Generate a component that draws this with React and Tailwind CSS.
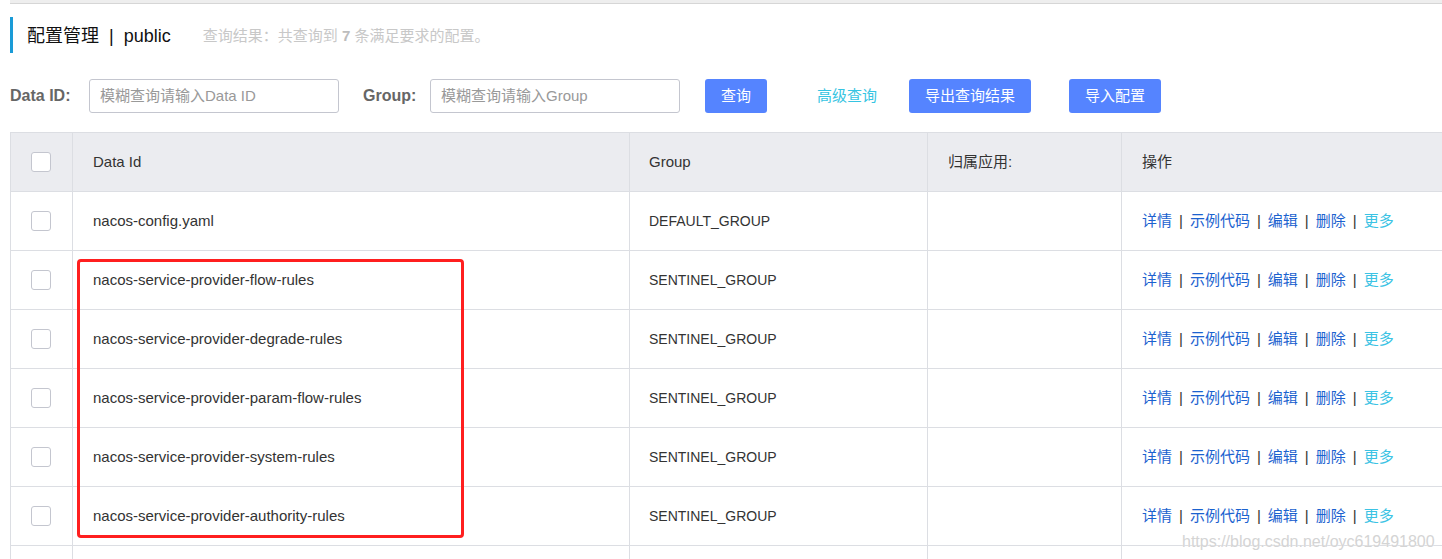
import React from "react";

const rows = [
  ["nacos-config.yaml", "DEFAULT_GROUP"],
  ["nacos-service-provider-flow-rules", "SENTINEL_GROUP"],
  ["nacos-service-provider-degrade-rules", "SENTINEL_GROUP"],
  ["nacos-service-provider-param-flow-rules", "SENTINEL_GROUP"],
  ["nacos-service-provider-system-rules", "SENTINEL_GROUP"],
  ["nacos-service-provider-authority-rules", "SENTINEL_GROUP"],
];

const font = { fontFamily: '"Liberation Sans", "Noto Sans CJK SC", sans-serif' };

function Checkbox() {
  return <div className="w-[20px] h-[20px] rounded-[3px] border border-[#c4c6cf] bg-white" />;
}

function Sep() {
  return <span className="mx-[7px] text-[#333]">|</span>;
}

function Row({ cells, header, empty }) {
  return (
    <div
      className={`grid grid-cols-[62px_557px_298px_194px_1fr] ${empty ? "h-[14px]" : "h-[59px]"} border-b border-[#dcdee3] ${header ? "bg-[#ebecf0]" : "bg-white"}`}
    >
      <div className="flex items-center justify-center border-r border-[#dcdee3] pr-[1px]">
        {!empty && <Checkbox />}
      </div>
      <div className="flex items-center pl-[20px] border-r border-[#dcdee3] text-[#333]">{cells?.[0]}</div>
      <div className={`flex items-center pl-[19px] border-r border-[#dcdee3] text-[#333] ${header ? "" : "text-[14px]"}`}>{cells?.[1]}</div>
      <div className="flex items-center pl-[20px] border-r border-[#dcdee3] text-[#333]">{cells?.[2]}</div>
      <div className="flex items-center pl-[20px] text-[#333]">{cells?.[3]}</div>
    </div>
  );
}

function Actions() {
  return (
    <div className="flex items-center">
      <span className="text-[#1b62cf]">详情</span>
      <Sep />
      <span className="text-[#1b62cf]">示例代码</span>
      <Sep />
      <span className="text-[#1b62cf]">编辑</span>
      <Sep />
      <span className="text-[#1b62cf]">删除</span>
      <Sep />
      <span className="text-[#3cc3e4]">更多</span>
    </div>
  );
}

export default function App() {
  return (
    <div className="relative w-[1442px] h-[559px] overflow-hidden bg-white text-[15px]" style={font}>
      <div className="ml-[10px] h-[4px] bg-[#eeeeee] border-b border-[#d6d6d6]" />
      <div className="ml-[10px] mt-[13px] h-[36px] border-l-[3px] border-[#1a9bd7] pl-[14px] flex items-center">
        <span className="text-[18px] text-[#111] pt-[2px]">配置管理</span>
        <span className="text-[18px] text-[#111] mx-[10px] pt-[2px]">|</span>
        <span className="text-[18px] text-[#111] pt-[2px]">public</span>
        <span className="ml-[32px] text-[15px] text-[#c8c8c8] pt-[2px]">
          查询结果：共查询到 <b className="text-[#bdbdbd]">7</b> 条满足要求的配置。
        </span>
      </div>

      <div className="mt-[26px] ml-[10px] h-[34px] flex items-center">
        <span className="w-[79px] font-bold text-[16px] text-[#666]">Data ID:</span>
        <div className="w-[250px] h-[34px] rounded-[3px] border border-[#c4c6cf] flex items-center pl-[10px] text-[#999]">
          模糊查询请输入Data ID
        </div>
        <span className="ml-[24px] w-[67px] font-bold text-[16px] text-[#666]">Group:</span>
        <div className="w-[250px] h-[34px] rounded-[3px] border border-[#c4c6cf] flex items-center pl-[10px] text-[#999]">
          模糊查询请输入Group
        </div>
        <div className="ml-[25px] w-[62px] h-[34px] rounded-[3px] bg-[#5584ff] text-white flex items-center justify-center">
          查询
        </div>
        <span className="ml-[50px] w-[61px] text-[#36c4e2]">高级查询</span>
        <div className="ml-[31px] w-[122px] h-[34px] rounded-[3px] bg-[#5584ff] text-white flex items-center justify-center">
          导出查询结果
        </div>
        <div className="ml-[38px] w-[92px] h-[34px] rounded-[3px] bg-[#5584ff] text-white flex items-center justify-center">
          导入配置
        </div>
      </div>

      <div className="relative mt-[19px] ml-[10px] border-l border-t border-[#dcdee3]">
        <Row header cells={["Data Id", "Group", "归属应用:", "操作"]} />
        {rows.map((r) => (
          <Row key={r[0]} cells={[r[0], r[1], "", <Actions />]} />
        ))}
        <Row empty />
        <div className="absolute left-[66px] top-[126px] w-[387px] h-[279px] border-[3px] border-[#ff1f1f] rounded-[4px] pointer-events-none" />
      </div>

      <div
        className="absolute left-[1182px] top-[530px] text-[16px] text-[#d4d4d4]"
        style={{ fontFamily: '"Liberation Sans", sans-serif', textShadow: "0 0 1px #fff" }}
      >
        https://blog.csdn.net/oyc619491800
      </div>
    </div>
  );
}
